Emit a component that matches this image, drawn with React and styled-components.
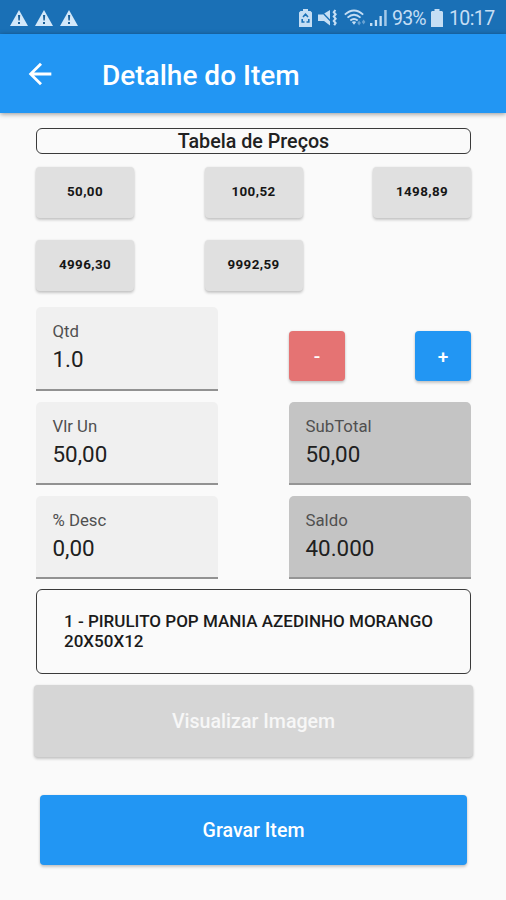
import React from "react";
import styled, { createGlobalStyle } from "styled-components";

const GlobalStyle = createGlobalStyle`
  * { box-sizing: border-box; }
  body { margin: 0; background: #fafafa; font-family: Roboto, sans-serif; color: #212121; }
  button { font-family: inherit; border: 0; padding: 0; }
`;

const Screen = styled.div`
  width: 506px;
  height: 900px;
  overflow: hidden;
  display: flex;
  flex-direction: column;
  background: #fafafa;
`;

const StatusBar = styled.div`
  height: 34px;
  flex: none;
  display: flex;
  align-items: center;
  justify-content: space-between;
  padding: 1px 11px 0 10px;
  background: #1a70b6;
  color: #c5def4;
`;

const Alerts = styled.div`
  display: flex;
  gap: 7px;
`;

const StatusIcons = styled.div`
  display: flex;
  align-items: center;
  svg { flex: none; display: block; }
`;

const StatusText = styled.span`
  width: ${(p) => p.$width}px;
  margin-left: ${(p) => p.$gap}px;
  padding-top: 2px;
  font-size: ${(p) => p.$size}px;
  line-height: 24px;
  letter-spacing: ${(p) => p.$spacing || 0}px;
  white-space: nowrap;
`;

const AppBar = styled.header`
  height: 79px;
  flex: none;
  display: flex;
  align-items: center;
  padding: 1px 0 0 23px;
  background: #2296f3;
  color: #fff;
  box-shadow: 0 1px 5px rgba(0, 0, 0, 0.42);
  svg { display: block; }
`;

const Title = styled.h1`
  margin: 3px 0 0 45px;
  font-size: 28px;
  font-weight: 500;
  line-height: 36px;
`;

const Content = styled.main`
  display: flex;
  flex-direction: column;
  padding: 15px 35px 0 36px;
`;

const SectionTitle = styled.h2`
  height: 26px;
  margin: 0;
  border: 1px solid #3a3a3a;
  border-radius: 6px;
  font-size: 19.7px;
  font-weight: 500;
  line-height: 25px;
  text-align: center;
`;

const PriceGrid = styled.div`
  display: grid;
  grid-template-columns: repeat(3, 98px);
  grid-auto-rows: 51px;
  justify-content: space-between;
  row-gap: 22px;
  margin: 13px 0 16px;
`;

const Button = styled.button`
  border-radius: 4px;
  font-weight: 500;
  box-shadow: 0 2px 3px rgba(0, 0, 0, 0.2), 0 0 2px rgba(0, 0, 0, 0.1);
`;

const PriceButton = styled(Button)`
  padding-bottom: 3px;
  background: #e0e0e0;
  color: #161616;
  font-size: 13.4px;
  font-weight: 700;
  letter-spacing: 0.4px;
`;

const FieldGrid = styled.div`
  display: grid;
  grid-template-columns: 182px 182px;
  grid-template-rows: 83.5px 83.5px 83px;
  justify-content: space-between;
  row-gap: 11px;
`;

const FieldBox = styled.label`
  display: flex;
  flex-direction: column;
  padding: 13px 17px 0 16.5px;
  border-radius: 5px 5px 0 0;
  background: ${(p) => (p.$filled ? "#c4c4c4" : "#f0f0f0")};
  border-bottom: 2px solid ${(p) => (p.$filled ? "#959595" : "#929292")};
`;

const FieldLabel = styled.span`
  color: #505050;
  font-size: 16.8px;
  line-height: 22px;
`;

const FieldValue = styled.span`
  color: #202020;
  font-size: 22.4px;
  line-height: 34px;
`;

const Stepper = styled.div`
  display: flex;
  justify-content: space-between;
  align-items: flex-start;
  padding-top: 24px;
`;

const StepButton = styled(Button)`
  width: 56px;
  height: 50px;
  background: ${(p) => p.$color};
  color: #fff;
  font-size: 19px;
`;

const Product = styled.p`
  height: 85px;
  margin: 10px 0 11px;
  padding: 21px 27px 0;
  border: 1px solid #3a3a3a;
  border-radius: 6px;
  color: #1b1b1b;
  font-size: 17.02px;
  font-weight: 500;
  line-height: 20px;
`;

const ActionButton = styled(Button)`
  height: ${(p) => p.$height}px;
  margin: ${(p) => p.$margin};
  background: ${(p) => p.$color};
  color: ${(p) => p.$text};
  font-size: 19.6px;
`;

const AlertIcon = () => (
  <svg width="18" height="16" viewBox="0 0 18 16">
    <path d="M9 0 18 16H0Z" fill="#d3e8f9" />
    <path d="M8 5h2.2l-.4 5.5H8.4ZM8 12h2v2H8Z" fill="#1a5f98" />
  </svg>
);

const BatterySaverIcon = () => (
  <svg width="13" height="18" viewBox="0 0 13 18">
    <path d="M4 0h5v2h2.5L13 3.5V18H0V3.5L1.5 2H4Z" fill="currentColor" />
    <path d="M4 8 6.5 5.3 9 8M9.8 10v3H7.5M5.5 13H3.2v-3" fill="none" stroke="#1a70b6" strokeWidth="1.6" />
  </svg>
);

const MutedIcon = () => (
  <svg width="20" height="18" viewBox="0 0 20 18">
    <path d="M0 5.5h4.5L12 1v15.5L6 12H0Z" fill="currentColor" />
    <path d="M2 1 14 13.5" stroke="#1a70b6" strokeWidth="1.3" />
    <path d="M17.4 1l-1.6 2.2 1.8 2-1.8 2.3 1.8 2.2-1.8 2.2 1.8 2.2-1.4 2.2" fill="none" stroke="currentColor" strokeWidth="2.1" />
  </svg>
);

const WifiIcon = () => (
  <svg width="22" height="18" viewBox="0 0 22 18">
    <g fill="none" stroke="currentColor" strokeWidth="1.8">
      <path d="M.8 5.6Q10 -2.5 19.2 5.6" />
      <path d="M3.5 8.6Q10 3 16.5 8.6" />
      <path d="M6.3 11.5Q10 8.4 13.7 11.5" />
    </g>
    <path d="M7.8 13Q10 11.5 12.2 13L10 15.8Z" fill="currentColor" />
    <path d="m13.3 14 1.8-2.5 1.8 2.5-1.8 2.5ZM17.8 13l1.8-2.5 1.8 2.5-1.8 2.5Z" fill="currentColor" opacity=".45" />
  </svg>
);

const SignalIcon = () => (
  <svg width="18" height="17" viewBox="0 0 18 17">
    <path d="M0 14h2.4v3H0ZM4.8 11h2.3v6H4.8ZM9.5 7h2.3v10H9.5Z" fill="currentColor" />
    <path d="M14.2 1h2.5v16h-2.5Z" fill="currentColor" opacity=".8" />
  </svg>
);

const BatteryIcon = () => (
  <svg width="12" height="18" viewBox="0 0 12 18">
    <path d="M3.5 0h5v2H11l1 1v15H0V3l1-1h2.5Z" fill="currentColor" />
  </svg>
);

const BackIcon = () => (
  <svg width="34" height="34" viewBox="0 0 24 24" fill="currentColor">
    <path d="M20 11H7.83l5.59-5.59L12 4l-8 8 8 8 1.41-1.41L7.83 13H20v-2z" />
  </svg>
);

const IconSlot = styled.span`
  margin-left: ${(p) => p.$gap}px;
`;

const Field = ({ label, value, filled }) => (
  <FieldBox $filled={filled}>
    <FieldLabel>{label}</FieldLabel>
    <FieldValue>{value}</FieldValue>
  </FieldBox>
);

const prices = ["50,00", "100,52", "1498,89", "4996,30", "9992,59"];

export default function App() {
  return (
    <Screen>
      <GlobalStyle />
      <StatusBar>
        <Alerts>
          <AlertIcon />
          <AlertIcon />
          <AlertIcon />
        </Alerts>
        <StatusIcons>
          <BatterySaverIcon />
          <IconSlot $gap={6}><MutedIcon /></IconSlot>
          <IconSlot $gap={6}><WifiIcon /></IconSlot>
          <IconSlot $gap={4}><SignalIcon /></IconSlot>
          <StatusText $gap={4} $width={34} $size={19.5} $spacing={-0.8}>93%</StatusText>
          <IconSlot $gap={5}><BatteryIcon /></IconSlot>
          <StatusText $gap={6} $width={46} $size={19.5} $spacing={-0.6}>10:17</StatusText>
        </StatusIcons>
      </StatusBar>
      <AppBar>
        <BackIcon />
        <Title>Detalhe do Item</Title>
      </AppBar>
      <Content>
        <SectionTitle>Tabela de Preços</SectionTitle>
        <PriceGrid>
          {prices.map((price) => (
            <PriceButton key={price}>{price}</PriceButton>
          ))}
        </PriceGrid>
        <FieldGrid>
          <Field label="Qtd" value="1.0" />
          <Stepper>
            <StepButton $color="#e57373">-</StepButton>
            <StepButton $color="#2296f3">+</StepButton>
          </Stepper>
          <Field label="Vlr Un" value="50,00" />
          <Field label="SubTotal" value="50,00" filled />
          <Field label="% Desc" value="0,00" />
          <Field label="Saldo" value="40.000" filled />
        </FieldGrid>
        <Product>1 - PIRULITO POP MANIA AZEDINHO MORANGO 20X50X12</Product>
        <ActionButton $height={72} $margin="0 -2px" $color="#d6d6d6" $text="#f7f7f7">
          Visualizar Imagem
        </ActionButton>
        <ActionButton $height={70} $margin="38px 4px 0" $color="#2296f3" $text="#fff">
          Gravar Item
        </ActionButton>
      </Content>
    </Screen>
  );
}
